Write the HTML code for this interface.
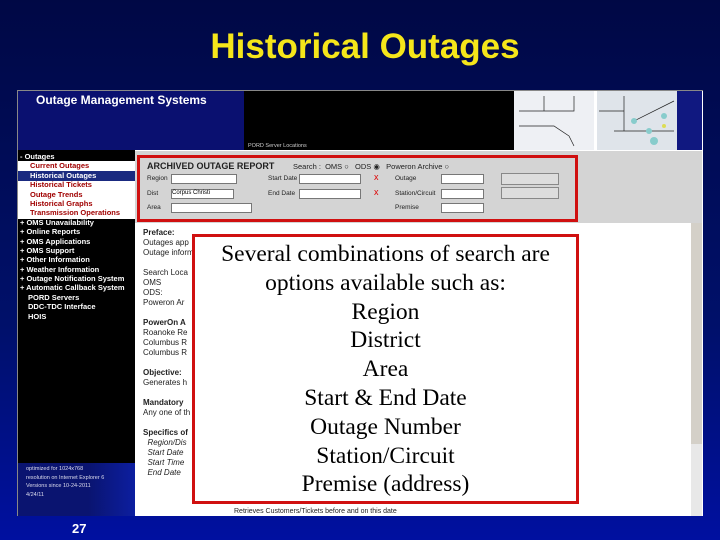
<!DOCTYPE html>
<html><head><meta charset="utf-8"><style>
*{margin:0;padding:0;box-sizing:border-box}
body{width:720px;height:540px;overflow:hidden;background:linear-gradient(#000845,#00106a 60%,#0010a0);font-family:"Liberation Sans",sans-serif;position:relative}
.a{position:absolute}
.nav div{font-size:7.5px;font-weight:bold;color:#fff;height:9.4px;line-height:9.4px;padding-left:2px;white-space:nowrap}
.nav .s{color:#a00000;padding-left:12px}
.c{font-size:8px;color:#222;white-space:nowrap}
.f{font-size:6.5px;color:#222}
.in{background:#fff;border:1px solid #777;height:10px}
.ov div{font-family:"Liberation Serif",serif;font-size:23.5px;line-height:28.8px;text-align:center;color:#000;white-space:nowrap}
</style></head><body>
<div class="a" style="left:0;top:27px;width:730px;text-align:center;font-size:35px;font-weight:bold;color:#f5e61a">Historical Outages</div>
<!-- screenshot -->
<div class="a" style="left:17px;top:90px;width:686px;height:426px;background:#fff;border-left:1px solid #888;border-top:1px solid #888"></div>
<div class="a" style="left:18px;top:91px;width:226px;height:59px;background:#0a1070"></div>
<div class="a" style="left:36px;top:93px;font-size:12px;font-weight:bold;color:#fff">Outage Management Systems</div>
<div class="a" style="left:244px;top:91px;width:270px;height:59px;background:#000"></div>
<div class="a" style="left:248px;top:143px;font-size:5.5px;color:#ccc">PORD Server Locations</div>
<div class="a" style="left:514px;top:91px;width:80px;height:59px;background:#eef0f4"></div>
<div class="a" style="left:597px;top:91px;width:80px;height:59px;background:#dfe4ea"></div>
<div class="a" style="left:677px;top:91px;width:25px;height:59px;background:#101880"></div>
<svg class="a" style="left:514px;top:91px" width="165" height="59"><path d="M5 20H30V5M30 20H60V5M5 35H40L55 45 60 55" stroke="#222" fill="none" stroke-width=".7"/><path d="M85 20H110M110 5V40M100 40H160M120 30L160 10" stroke="#222" fill="none" stroke-width=".7"/><circle cx="120" cy="30" r="3" fill="#8cc"/><circle cx="135" cy="40" r="3" fill="#8cc"/><circle cx="150" cy="25" r="3" fill="#8cc"/><circle cx="140" cy="50" r="4" fill="#8cc"/><circle cx="150" cy="35" r="2" fill="#dd5"/></svg>
<!-- left nav -->
<div class="a" style="left:18px;top:150px;width:117px;height:313px;background:#000"></div>
<div class="a" style="left:18px;top:161px;width:117px;height:58px;background:#fff"></div>
<div class="a" style="left:18px;top:171px;width:117px;height:10px;background:#1a2a80"></div>
<div class="a nav" style="left:18px;top:152px;width:117px">
<div>- Outages</div><div class="s">Current Outages</div><div class="s" style="color:#fff">Historical Outages</div><div class="s">Historical Tickets</div><div class="s">Outage Trends</div><div class="s">Historical Graphs</div><div class="s">Transmission Operations</div>
<div>+ OMS Unavailability</div><div>+ Online Reports</div><div>+ OMS Applications</div><div>+ OMS Support</div><div>+ Other Information</div><div>+ Weather Information</div><div>+ Outage Notification System</div><div>+ Automatic Callback System</div><div style="padding-left:10px">PORD Servers</div><div style="padding-left:10px">DDC-TDC Interface</div><div style="padding-left:10px">HOIS</div></div>
<div class="a" style="left:18px;top:463px;width:117px;height:53px;background:linear-gradient(90deg,#0a1470,#0a1470 60%,#0c1ea0)"></div>
<div class="a" style="left:26px;top:465px;font-size:5.5px;line-height:8.5px;color:#dde">optimized for 1024x768<br>resolution on Internet Explorer 6<br>Versions since 10-24-2011<br>4/24/11</div>
<div class="a" style="left:72px;top:521px;font-size:13px;font-weight:bold;color:#fff">27</div>
<!-- gray panel -->
<div class="a" style="left:135px;top:151px;width:567px;height:72px;background:#d4d4d4"></div>
<div class="a" style="left:137px;top:155px;width:441px;height:67px;border:3px solid #d01010"></div>
<div class="a" style="left:147px;top:161px;font-size:9px;font-weight:bold;color:#222">ARCHIVED OUTAGE REPORT</div>
<div class="a f" style="left:293px;top:162px;font-size:7.5px">Search :&nbsp; OMS ○&nbsp;&nbsp; ODS ◉&nbsp;&nbsp; Poweron Archive ○</div>
<div class="a f" style="left:147px;top:175px">Region</div><div class="a in" style="left:171px;top:174px;width:66px"></div>
<div class="a f" style="left:147px;top:190px">Dist</div><div class="a in" style="left:171px;top:189px;width:63px;font-size:6px">Corpus Christi</div>
<div class="a f" style="left:147px;top:204px">Area</div><div class="a in" style="left:171px;top:203px;width:81px"></div>
<div class="a f" style="left:268px;top:175px">Start Date</div><div class="a in" style="left:299px;top:174px;width:62px"></div>
<div class="a f" style="left:268px;top:190px">End Date</div><div class="a in" style="left:299px;top:189px;width:62px"></div>
<div class="a" style="left:374px;top:172px;color:#d00;font-size:9px">x</div><div class="a" style="left:374px;top:187px;color:#d00;font-size:9px">x</div>
<div class="a f" style="left:395px;top:175px">Outage</div><div class="a in" style="left:441px;top:174px;width:43px"></div>
<div class="a f" style="left:395px;top:190px">Station/Circuit</div><div class="a in" style="left:441px;top:189px;width:43px"></div>
<div class="a f" style="left:395px;top:204px">Premise</div><div class="a in" style="left:441px;top:203px;width:43px"></div>
<div class="a" style="left:501px;top:173px;width:58px;height:12px;background:#ddd;border:1px solid #888"></div>
<div class="a" style="left:501px;top:187px;width:58px;height:12px;background:#ddd;border:1px solid #888"></div>
<!-- scrollbar -->
<div class="a" style="left:691px;top:223px;width:11px;height:293px;background:#d4d0c8"></div>
<div class="a" style="left:691px;top:444px;width:11px;height:72px;background:#e8e8e8"></div>
<!-- content text -->
<div class="a c" style="left:143px;top:228px;line-height:10px"><b>Preface:</b><br>Outages app<br>Outage inform<br><br>Search Loca<br>OMS<br>ODS:<br>Poweron Ar<br><br><b>PowerOn A</b><br>Roanoke Re<br>Columbus R<br>Columbus R<br><br><b>Objective:</b><br>Generates h<br><br><b>Mandatory</b><br>Any one of th<br><br><b>Specifics of</b><br>&nbsp;&nbsp;<i>Region/Dis</i><br>&nbsp;&nbsp;<i>Start Date</i><br>&nbsp;&nbsp;<i>Start Time</i><br>&nbsp;&nbsp;<i>End Date</i></div>
<div class="a c" style="left:234px;top:508px;font-size:7px">Retrieves Customers/Tickets before and on this date</div>
<!-- overlay -->
<div class="a ov" style="left:192px;top:234px;width:387px;height:270px;background:#fff;border:3px solid #d01010;padding-top:3px">
<div>Several combinations of search are</div><div>options available such as:</div><div>Region</div><div>District</div><div>Area</div><div>Start &amp; End Date</div><div>Outage Number</div><div>Station/Circuit</div><div>Premise (address)</div></div>
</body></html>
